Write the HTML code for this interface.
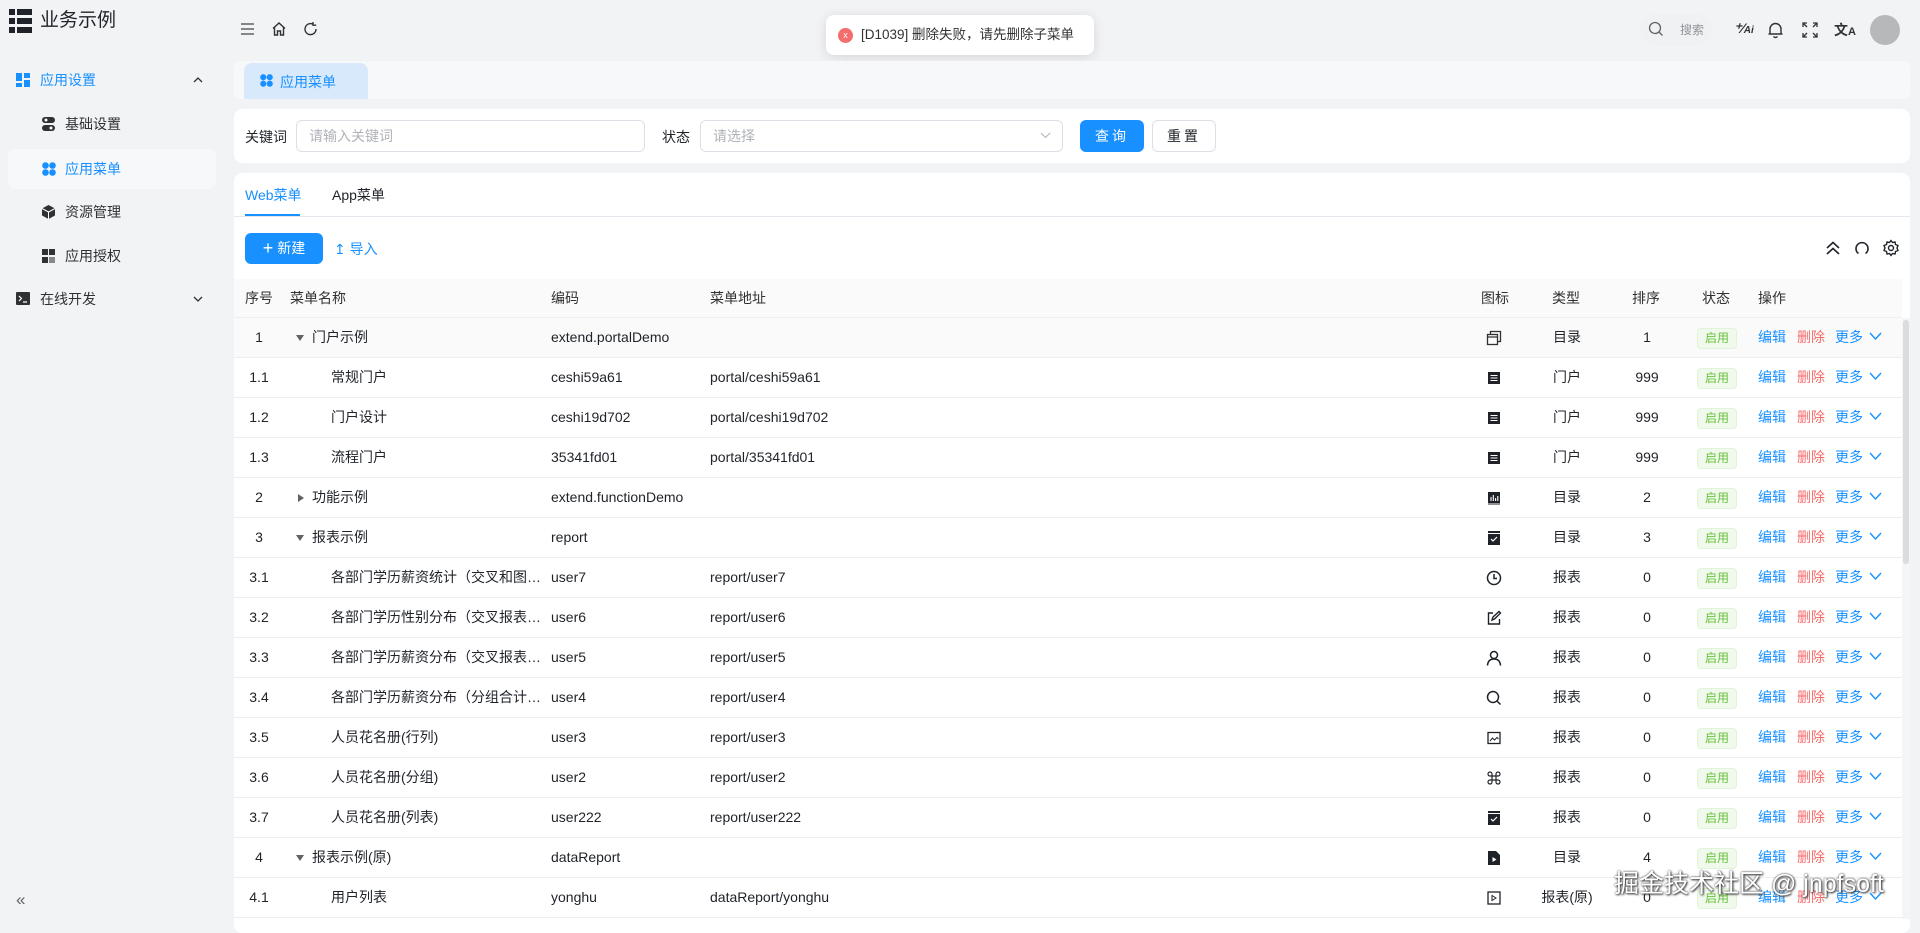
<!DOCTYPE html>
<html><head><meta charset="utf-8"><style>
*{box-sizing:border-box;margin:0;padding:0}
body{width:1920px;height:919px;overflow:hidden;background:#f2f3f5;font-family:"Liberation Sans","Noto Sans CJK SC",sans-serif;color:#1f2329;font-size:14px;position:relative}
.a{position:absolute}
.side{left:0;top:0;width:228px;height:919px;background:#f2f3f5}
.mi{position:absolute;left:0;width:228px;height:40px;line-height:40px;font-size:14px;color:#303133}
.card{background:#fff;border-radius:8px}
.row{position:absolute;left:234px;width:1668px;height:40px;border-bottom:1px solid #ebeef5;line-height:39px}
.row span,.hd span{position:absolute;white-space:nowrap}
.n{left:0;width:50px;text-align:center}
.nm{left:62px;width:252px;overflow:hidden;text-overflow:ellipsis}
.cd{left:317px}
.ad{left:476px}
.ic{left:1252px;width:20px;top:12px;height:16px;line-height:16px}
.ty{left:1303px;width:60px;text-align:center}
.so{left:1383px;width:60px;text-align:center}
.st{left:1463px;top:10px;height:21px;width:40px;line-height:19px;border:1px solid #e1f3d8;background:#f0f9eb;color:#67c23a;border-radius:4px;font-size:12px;text-align:center}
.e{left:1524px;color:#1890ff}
.d{left:1563px;color:#f56c6c}
.m{left:1601px;color:#1890ff}
.ch{left:1635px;top:14px}
.c{padding-left:35px}
.hd{position:absolute;left:234px;top:279px;width:1668px;height:39px;background:#fafafa;line-height:39px;border-bottom:1px solid #ebeef5;color:#303133}
.car{display:inline-block;width:0;height:0;border-left:4.5px solid transparent;border-right:4.5px solid transparent;border-top:6px solid #606266;margin-right:8px;vertical-align:middle}
.carr{display:inline-block;width:0;height:0;border-top:4.5px solid transparent;border-bottom:4.5px solid transparent;border-left:6px solid #606266;margin-right:8px;margin-left:2px;vertical-align:middle}
svg{display:block}
</style></head><body>

<div class="a side">
 <svg class="a" style="left:9px;top:9px" width="23" height="24" viewBox="0 0 23 24"><g fill="#1f2329"><rect x="0" y="0" width="6" height="6"/><rect x="8" y="0" width="15" height="6"/><rect x="0" y="9" width="6" height="6"/><rect x="8" y="9" width="15" height="6"/><rect x="0" y="18" width="6" height="6"/><rect x="8" y="18" width="15" height="6"/></g></svg>
 <div class="a" style="left:40px;top:8px;font-size:19px;line-height:26px;color:#1f2329">业务示例</div>
 <div class="mi" style="top:60px;color:#1890ff"><svg class="a" style="left:16px;top:13px" width="14" height="14" viewBox="0 0 14 14"><g fill="#1890ff"><rect width="6" height="8"/><rect x="8" width="6" height="5"/><rect y="10" width="6" height="4"/><rect x="8" y="7" width="6" height="7"/></g></svg><span class="a" style="left:40px">应用设置</span><svg class="a" style="left:193px;top:16px" width="10" height="7" viewBox="0 0 10 7"><path d="M1 6L5 2L9 6" stroke="#303133" stroke-width="1.3" fill="none"/></svg></div>
 <div class="mi" style="top:104px"><svg class="a" style="left:42px;top:13px" width="13" height="14" viewBox="0 0 13 14"><rect x="0" y="0" width="13" height="6" rx="3" fill="#303133"/><rect x="0" y="8" width="13" height="6" rx="3" fill="#303133"/><circle cx="4" cy="3" r="1.5" fill="#fff"/><circle cx="9" cy="11" r="1.5" fill="#fff"/></svg><span class="a" style="left:65px">基础设置</span></div>
 <div class="mi" style="top:149px;left:8px;width:208px;background:#f7f8fa;border-radius:8px;color:#1890ff"><svg class="a" style="left:34px;top:13px" width="14" height="14" viewBox="0 0 14 14"><g fill="#1890ff"><circle cx="3.5" cy="3.5" r="3.3"/><circle cx="10.5" cy="3.5" r="3.3"/><circle cx="3.5" cy="10.5" r="3.3"/><circle cx="10.5" cy="10.5" r="3.3"/></g></svg><span class="a" style="left:57px">应用菜单</span></div>
 <div class="mi" style="top:192px"><svg class="a" style="left:42px;top:13px" width="13" height="14" viewBox="0 0 13 14"><path d="M6.5 0L13 3.5V10.5L6.5 14L0 10.5V3.5Z" fill="#303133"/><path d="M0 3.5L6.5 7L13 3.5M6.5 7V14" stroke="#fff" stroke-width="1" fill="none"/></svg><span class="a" style="left:65px">资源管理</span></div>
 <div class="mi" style="top:236px"><svg class="a" style="left:42px;top:13px" width="13" height="14" viewBox="0 0 13 14"><g fill="#303133"><rect width="6" height="6"/><rect x="7" width="6" height="6"/><rect y="8" width="6" height="6"/><rect x="7" y="8" width="6" height="6" fill="#888"/></g></svg><span class="a" style="left:65px">应用授权</span></div>
 <div class="mi" style="top:279px"><svg class="a" style="left:16px;top:13px" width="14" height="13" viewBox="0 0 14 13"><rect width="14" height="13" rx="1" fill="#303133"/><path d="M3 4L5.5 6.5L3 9M7 10H11" stroke="#fff" stroke-width="1.2" fill="none"/></svg><span class="a" style="left:40px">在线开发</span><svg class="a" style="left:193px;top:17px" width="10" height="7" viewBox="0 0 10 7"><path d="M1 1L5 5L9 1" stroke="#303133" stroke-width="1.3" fill="none"/></svg></div>
 <div class="a" style="left:16px;top:890px;font-size:17px;color:#606266">«</div>
</div>

<svg class="a" style="left:241px;top:23px" width="13" height="12" viewBox="0 0 13 12"><path d="M0 1H13M0 6H13M0 11H13" stroke="#606266" stroke-width="1.4"/></svg>
<svg class="a" style="left:271px;top:21px" width="16" height="16" viewBox="0 0 16 16"><path d="M2 7.5L8 2L14 7.5M3.5 6.3V14H6.5V10H9.5V14H12.5V6.3" stroke="#303133" stroke-width="1.4" fill="none"/></svg>
<svg class="a" style="left:303px;top:21px" width="15" height="16" viewBox="0 0 15 16"><path d="M13 8A5.5 5.5 0 1 1 10.5 3.5M10 1V4.2H13.2" stroke="#303133" stroke-width="1.4" fill="none"/></svg>

<div class="a" style="left:826px;top:15px;width:268px;height:40px;background:#fff;border-radius:8px;box-shadow:0 2px 12px rgba(0,0,0,.12);line-height:40px;font-size:13.5px;color:#303133">
 <div class="a" style="left:12px;top:13px;width:15px;height:15px;border-radius:50%;background:#f56c6c;color:#fff;font-size:9px;line-height:15px;text-align:center">x</div>
 <span class="a" style="left:35px">[D1039] 删除失败，请先删除子菜单</span>
</div>

<div class="a" style="left:1640px;top:14px;width:72px;height:32px;border-radius:16px;background:#f0f1f3"></div>
<svg class="a" style="left:1648px;top:21px" width="16" height="16" viewBox="0 0 16 16"><circle cx="7" cy="7" r="5.5" stroke="#606266" stroke-width="1.3" fill="none"/><path d="M11 11L14.5 14.5" stroke="#606266" stroke-width="1.3"/></svg>
<div class="a" style="left:1680px;top:21px;font-size:12px;color:#909399">搜索</div>
<div class="a" style="left:1734px;top:20px;font-size:14px;font-style:italic;font-weight:bold;color:#303133">⁺⁄<span style="font-size:10px">Ai</span></div>
<svg class="a" style="left:1767px;top:21px" width="17" height="18" viewBox="0 0 17 18"><path d="M3 13V8A5.5 5.5 0 0 1 14 8V13H15.5H1.5H3M6.5 15.5Q8.5 17.5 10.5 15.5" stroke="#303133" stroke-width="1.4" fill="none"/></svg>
<svg class="a" style="left:1802px;top:22px" width="16" height="16" viewBox="0 0 16 16"><path d="M1 5V1H5M1 1L5 5M11 1H15V5M15 1L11 5M1 11V15H5M1 15L5 11M15 11V15H11M15 15L11 11" stroke="#303133" stroke-width="1.3" fill="none"/></svg>
<div class="a" style="left:1834px;top:20px;font-size:14px;font-weight:bold;color:#303133">文<span style="font-size:11px">A</span></div>
<div class="a" style="left:1870px;top:15px;width:30px;height:30px;border-radius:50%;background:#b7b8ba"></div>

<div class="a" style="left:234px;top:61px;width:1676px;height:38px;background:#f7f8fa;border-radius:6px"></div>
<div class="a" style="left:244px;top:63px;width:124px;height:36px;background:#d8e9fb;border-radius:8px 8px 0 0"></div>
<svg class="a" style="left:260px;top:74px" width="13" height="13" viewBox="0 0 14 14"><g fill="#1890ff"><circle cx="3.5" cy="3.5" r="3.3"/><circle cx="10.5" cy="3.5" r="3.3"/><circle cx="3.5" cy="10.5" r="3.3"/><circle cx="10.5" cy="10.5" r="3.3"/></g></svg>
<div class="a" style="left:280px;top:72px;color:#1890ff">应用菜单</div>

<div class="a card" style="left:234px;top:109px;width:1676px;height:54px"></div>
<div class="a" style="left:245px;top:127px">关键词</div>
<div class="a" style="left:296px;top:120px;width:349px;height:32px;border:1px solid #dcdfe6;border-radius:6px;padding-left:12px;line-height:30px;color:#b0b3b8">请输入关键词</div>
<div class="a" style="left:662px;top:127px">状态</div>
<div class="a" style="left:700px;top:120px;width:363px;height:32px;border:1px solid #dcdfe6;border-radius:6px;padding-left:12px;line-height:30px;color:#b0b3b8">请选择</div>
<svg class="a" style="left:1040px;top:132px" width="11" height="7" viewBox="0 0 11 7"><path d="M1 1L5.5 5.5L10 1" stroke="#b0b3b8" stroke-width="1.1" fill="none"/></svg>
<div class="a" style="left:1080px;top:120px;width:64px;height:32px;background:#1890ff;border-radius:6px;color:#fff;text-align:center;line-height:32px;letter-spacing:3px">查询</div>
<div class="a" style="left:1152px;top:120px;width:64px;height:32px;border:1px solid #dcdfe6;border-radius:6px;text-align:center;line-height:30px;letter-spacing:3px">重置</div>

<div class="a card" style="left:234px;top:173px;width:1676px;height:760px"></div>
<div class="a" style="left:245px;top:185px;color:#1890ff">Web菜单</div>
<div class="a" style="left:332px;top:185px">App菜单</div>
<div class="a" style="left:234px;top:216px;width:1676px;height:1px;background:#e4e7ed"></div>
<div class="a" style="left:245px;top:214px;width:55px;height:2px;background:#1890ff"></div>
<div class="a" style="left:245px;top:233px;width:78px;height:31px;background:#1890ff;border-radius:6px;color:#fff;line-height:31px;text-align:center;font-size:14px"><span style="font-size:18px;vertical-align:-1px">+</span> 新建</div>
<div class="a" style="left:334px;top:239px;color:#1890ff;font-size:14px">↥ 导入</div>
<svg class="a" style="left:1825px;top:240px" width="16" height="16" viewBox="0 0 16 16"><path d="M2 8L8 2.5L14 8M2 14L8 8.5L14 14" stroke="#1f2329" stroke-width="1.6" fill="none"/></svg>
<svg class="a" style="left:1854px;top:240px" width="16" height="16" viewBox="0 0 16 16"><path d="M4.5 13.5A6 6 0 1 1 11.5 13.5" stroke="#1f2329" stroke-width="1.6" fill="none"/></svg>
<svg class="a" style="left:1882px;top:239px" width="18" height="18" viewBox="0 0 18 18"><path d="M9 1.5L10.5 3.5L13 3L13.5 5.5L16 6.5L15 9L16 11.5L13.5 12.5L13 15L10.5 14.5L9 16.5L7.5 14.5L5 15L4.5 12.5L2 11.5L3 9L2 6.5L4.5 5.5L5 3L7.5 3.5Z" stroke="#1f2329" stroke-width="1.4" fill="none"/><circle cx="9" cy="9" r="2.5" stroke="#1f2329" stroke-width="1.4" fill="none"/></svg>

<div class="hd"><span class="n" style="left:0;width:50px;text-align:center">序号</span><span style="left:56px">菜单名称</span><span style="left:317px">编码</span><span style="left:476px">菜单地址</span><span style="left:1247px">图标</span><span style="left:1318px">类型</span><span style="left:1398px">排序</span><span style="left:1468px">状态</span><span style="left:1524px">操作</span></div>

<div class="row" style="top:318px;background:#fafafa"><span class="n">1</span><span class="nm"><i class="car"></i>门户示例</span><span class="cd">extend.portalDemo</span><span class="ic"><svg width="16" height="16" viewBox="0 0 16 16"><rect x="1.5" y="4.5" width="10" height="10" stroke="#303133" stroke-width="1.3" fill="none"/><path d="M4.5 4.5V1.5H14.5V11.5H11.5M1.5 7H11.5" stroke="#303133" stroke-width="1.3" fill="none"/></svg></span><span class="ty">目录</span><span class="so">1</span><span class="st">启用</span><span class="e">编辑</span><span class="d">删除</span><span class="m">更多</span><span class="ch"><svg width="13" height="9" viewBox="0 0 13 9"><path d="M1 1L6.5 7L12 1" stroke="#1890ff" stroke-width="1.4" fill="none"/></svg></span></div>

<div class="row" style="top:358px"><span class="n">1.1</span><span class="nm c">常规门户</span><span class="cd">ceshi59a61</span><span class="ad">portal/ceshi59a61</span><span class="ic"><svg width="16" height="16" viewBox="0 0 16 16"><rect x="2" y="2" width="12" height="12" fill="#1f2329"/><path d="M4.5 5.5H11.5M4.5 8H11.5M4.5 10.5H11.5" stroke="#fff" stroke-width="1"/></svg></span><span class="ty">门户</span><span class="so">999</span><span class="st">启用</span><span class="e">编辑</span><span class="d">删除</span><span class="m">更多</span><span class="ch"><svg width="13" height="9" viewBox="0 0 13 9"><path d="M1 1L6.5 7L12 1" stroke="#1890ff" stroke-width="1.4" fill="none"/></svg></span></div>

<div class="row" style="top:398px"><span class="n">1.2</span><span class="nm c">门户设计</span><span class="cd">ceshi19d702</span><span class="ad">portal/ceshi19d702</span><span class="ic"><svg width="16" height="16" viewBox="0 0 16 16"><rect x="2" y="2" width="12" height="12" fill="#1f2329"/><path d="M4.5 5.5H11.5M4.5 8H11.5M4.5 10.5H11.5" stroke="#fff" stroke-width="1"/></svg></span><span class="ty">门户</span><span class="so">999</span><span class="st">启用</span><span class="e">编辑</span><span class="d">删除</span><span class="m">更多</span><span class="ch"><svg width="13" height="9" viewBox="0 0 13 9"><path d="M1 1L6.5 7L12 1" stroke="#1890ff" stroke-width="1.4" fill="none"/></svg></span></div>

<div class="row" style="top:438px"><span class="n">1.3</span><span class="nm c">流程门户</span><span class="cd">35341fd01</span><span class="ad">portal/35341fd01</span><span class="ic"><svg width="16" height="16" viewBox="0 0 16 16"><rect x="2" y="2" width="12" height="12" fill="#1f2329"/><path d="M4.5 5.5H11.5M4.5 8H11.5M4.5 10.5H11.5" stroke="#fff" stroke-width="1"/></svg></span><span class="ty">门户</span><span class="so">999</span><span class="st">启用</span><span class="e">编辑</span><span class="d">删除</span><span class="m">更多</span><span class="ch"><svg width="13" height="9" viewBox="0 0 13 9"><path d="M1 1L6.5 7L12 1" stroke="#1890ff" stroke-width="1.4" fill="none"/></svg></span></div>

<div class="row" style="top:478px"><span class="n">2</span><span class="nm"><i class="carr"></i>功能示例</span><span class="cd">extend.functionDemo</span><span class="ic"><svg width="16" height="16" viewBox="0 0 16 16"><rect x="2" y="2" width="12" height="11" fill="#1f2329"/><path d="M5 11V7M7.3 11V5M9.6 11V8M11.8 11V6" stroke="#fff" stroke-width="1.1"/><rect x="2" y="13.5" width="12" height="1" fill="#1f2329"/></svg></span><span class="ty">目录</span><span class="so">2</span><span class="st">启用</span><span class="e">编辑</span><span class="d">删除</span><span class="m">更多</span><span class="ch"><svg width="13" height="9" viewBox="0 0 13 9"><path d="M1 1L6.5 7L12 1" stroke="#1890ff" stroke-width="1.4" fill="none"/></svg></span></div>

<div class="row" style="top:518px"><span class="n">3</span><span class="nm"><i class="car"></i>报表示例</span><span class="cd">report</span><span class="ic"><svg width="16" height="16" viewBox="0 0 16 16"><rect x="2" y="1" width="12" height="2" fill="#1f2329"/><rect x="2" y="4" width="12" height="11" fill="#1f2329"/><path d="M5 9L7 11L11 7" stroke="#fff" stroke-width="1.2" fill="none"/></svg></span><span class="ty">目录</span><span class="so">3</span><span class="st">启用</span><span class="e">编辑</span><span class="d">删除</span><span class="m">更多</span><span class="ch"><svg width="13" height="9" viewBox="0 0 13 9"><path d="M1 1L6.5 7L12 1" stroke="#1890ff" stroke-width="1.4" fill="none"/></svg></span></div>

<div class="row" style="top:558px"><span class="n">3.1</span><span class="nm c">各部门学历薪资统计（交叉和图表）</span><span class="cd">user7</span><span class="ad">report/user7</span><span class="ic"><svg width="16" height="16" viewBox="0 0 16 16"><circle cx="8" cy="8" r="6.5" stroke="#1f2329" stroke-width="1.5" fill="none"/><path d="M8 4V8.5H11" stroke="#1f2329" stroke-width="1.5" fill="none"/></svg></span><span class="ty">报表</span><span class="so">0</span><span class="st">启用</span><span class="e">编辑</span><span class="d">删除</span><span class="m">更多</span><span class="ch"><svg width="13" height="9" viewBox="0 0 13 9"><path d="M1 1L6.5 7L12 1" stroke="#1890ff" stroke-width="1.4" fill="none"/></svg></span></div>

<div class="row" style="top:598px"><span class="n">3.2</span><span class="nm c">各部门学历性别分布（交叉报表分析）</span><span class="cd">user6</span><span class="ad">report/user6</span><span class="ic"><svg width="16" height="16" viewBox="0 0 16 16"><path d="M7 3H2.5V14H13.5V9M6 10L7 7L13 1.5L14.5 3L8.5 9Z" stroke="#1f2329" stroke-width="1.4" fill="none"/></svg></span><span class="ty">报表</span><span class="so">0</span><span class="st">启用</span><span class="e">编辑</span><span class="d">删除</span><span class="m">更多</span><span class="ch"><svg width="13" height="9" viewBox="0 0 13 9"><path d="M1 1L6.5 7L12 1" stroke="#1890ff" stroke-width="1.4" fill="none"/></svg></span></div>

<div class="row" style="top:638px"><span class="n">3.3</span><span class="nm c">各部门学历薪资分布（交叉报表分析）</span><span class="cd">user5</span><span class="ad">report/user5</span><span class="ic"><svg width="16" height="16" viewBox="0 0 16 16"><circle cx="8" cy="5" r="3.5" stroke="#1f2329" stroke-width="1.5" fill="none"/><path d="M1.5 15.5Q2 9 8 9Q14 9 14.5 15.5" stroke="#1f2329" stroke-width="1.5" fill="none"/></svg></span><span class="ty">报表</span><span class="so">0</span><span class="st">启用</span><span class="e">编辑</span><span class="d">删除</span><span class="m">更多</span><span class="ch"><svg width="13" height="9" viewBox="0 0 13 9"><path d="M1 1L6.5 7L12 1" stroke="#1890ff" stroke-width="1.4" fill="none"/></svg></span></div>

<div class="row" style="top:678px"><span class="n">3.4</span><span class="nm c">各部门学历薪资分布（分组合计报表）</span><span class="cd">user4</span><span class="ad">report/user4</span><span class="ic"><svg width="16" height="16" viewBox="0 0 16 16"><circle cx="7" cy="7" r="5.5" stroke="#1f2329" stroke-width="1.5" fill="none"/><path d="M11 11L14.5 14.5" stroke="#1f2329" stroke-width="1.5"/></svg></span><span class="ty">报表</span><span class="so">0</span><span class="st">启用</span><span class="e">编辑</span><span class="d">删除</span><span class="m">更多</span><span class="ch"><svg width="13" height="9" viewBox="0 0 13 9"><path d="M1 1L6.5 7L12 1" stroke="#1890ff" stroke-width="1.4" fill="none"/></svg></span></div>

<div class="row" style="top:718px"><span class="n">3.5</span><span class="nm c">人员花名册(行列)</span><span class="cd">user3</span><span class="ad">report/user3</span><span class="ic"><svg width="16" height="16" viewBox="0 0 16 16"><rect x="2" y="2.5" width="12" height="11" stroke="#1f2329" stroke-width="1.3" fill="none"/><path d="M4 11L6.5 8L8.5 10L11 7.5L12.5 9" stroke="#1f2329" stroke-width="1" fill="none"/></svg></span><span class="ty">报表</span><span class="so">0</span><span class="st">启用</span><span class="e">编辑</span><span class="d">删除</span><span class="m">更多</span><span class="ch"><svg width="13" height="9" viewBox="0 0 13 9"><path d="M1 1L6.5 7L12 1" stroke="#1890ff" stroke-width="1.4" fill="none"/></svg></span></div>

<div class="row" style="top:758px"><span class="n">3.6</span><span class="nm c">人员花名册(分组)</span><span class="cd">user2</span><span class="ad">report/user2</span><span class="ic"><svg width="16" height="16" viewBox="0 0 16 16"><path d="M6 6V4A2 2 0 1 0 4 6H12A2 2 0 1 0 10 4V12A2 2 0 1 0 12 10H4A2 2 0 1 0 6 12Z" stroke="#1f2329" stroke-width="1.2" fill="none"/></svg></span><span class="ty">报表</span><span class="so">0</span><span class="st">启用</span><span class="e">编辑</span><span class="d">删除</span><span class="m">更多</span><span class="ch"><svg width="13" height="9" viewBox="0 0 13 9"><path d="M1 1L6.5 7L12 1" stroke="#1890ff" stroke-width="1.4" fill="none"/></svg></span></div>

<div class="row" style="top:798px"><span class="n">3.7</span><span class="nm c">人员花名册(列表)</span><span class="cd">user222</span><span class="ad">report/user222</span><span class="ic"><svg width="16" height="16" viewBox="0 0 16 16"><rect x="2" y="1" width="12" height="2" fill="#1f2329"/><rect x="2" y="4" width="12" height="11" fill="#1f2329"/><path d="M5 9L7 11L11 7" stroke="#fff" stroke-width="1.2" fill="none"/></svg></span><span class="ty">报表</span><span class="so">0</span><span class="st">启用</span><span class="e">编辑</span><span class="d">删除</span><span class="m">更多</span><span class="ch"><svg width="13" height="9" viewBox="0 0 13 9"><path d="M1 1L6.5 7L12 1" stroke="#1890ff" stroke-width="1.4" fill="none"/></svg></span></div>

<div class="row" style="top:838px"><span class="n">4</span><span class="nm"><i class="car"></i>报表示例(原)</span><span class="cd">dataReport</span><span class="ic"><svg width="16" height="16" viewBox="0 0 16 16"><path d="M2 1H10L14 5V15H2Z" fill="#1f2329"/><path d="M6.5 7V12L10.5 9.5Z" fill="#fff"/></svg></span><span class="ty">目录</span><span class="so">4</span><span class="st">启用</span><span class="e">编辑</span><span class="d">删除</span><span class="m">更多</span><span class="ch"><svg width="13" height="9" viewBox="0 0 13 9"><path d="M1 1L6.5 7L12 1" stroke="#1890ff" stroke-width="1.4" fill="none"/></svg></span></div>

<div class="row" style="top:878px"><span class="n">4.1</span><span class="nm c">用户列表</span><span class="cd">yonghu</span><span class="ad">dataReport/yonghu</span><span class="ic"><svg width="16" height="16" viewBox="0 0 16 16"><rect x="2" y="2" width="12" height="12" stroke="#1f2329" stroke-width="1.3" fill="none"/><path d="M6 5.5V10.5L10 8Z" stroke="#1f2329" stroke-width="1" fill="none"/></svg></span><span class="ty" style="left:1293px;width:80px">报表(原)</span><span class="so">0</span><span class="st">启用</span><span class="e">编辑</span><span class="d">删除</span><span class="m">更多</span><span class="ch"><svg width="13" height="9" viewBox="0 0 13 9"><path d="M1 1L6.5 7L12 1" stroke="#1890ff" stroke-width="1.4" fill="none"/></svg></span></div>

<div class="a" style="left:1902px;top:318px;width:8px;height:601px;background:#f5f5f5"></div>
<div class="a" style="left:1903px;top:320px;width:6px;height:244px;background:#dcdcdc;border-radius:3px"></div>

<div class="a" style="left:1614px;top:864px;font-size:25px;color:#fff;text-shadow:0 0 2px #333,1px 1px 2px #333;white-space:nowrap">掘金技术社区 @ jnpfsoft</div>
</body></html>
